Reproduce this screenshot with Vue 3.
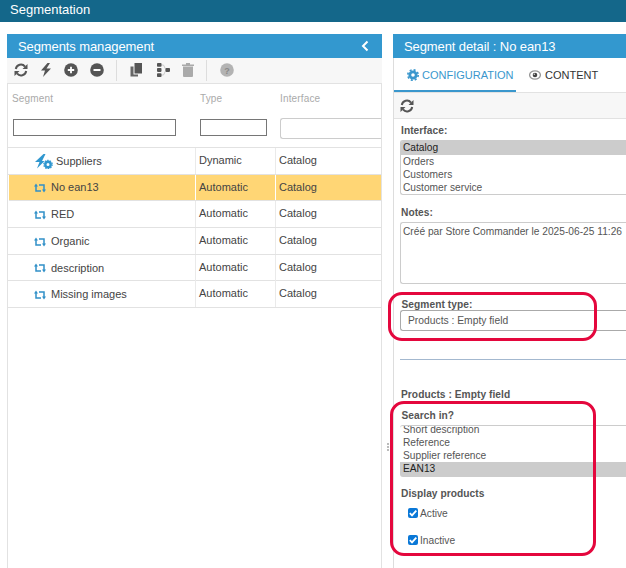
<script setup>
const rows = [
  { name: 'No ean13', type: 'Automatic', selected: true },
  { name: 'RED', type: 'Automatic' },
  { name: 'Organic', type: 'Automatic' },
  { name: 'description', type: 'Automatic' },
  { name: 'Missing images', type: 'Automatic' }
]
const interfaces = ['Catalog', 'Orders', 'Customers', 'Customer service']
const searchIn = ['Reference', 'Supplier reference']
</script>

<template>
  <div class="app">
    <header class="topbar">Segmentation</header>
    <main class="main">
      <section class="panel left">
        <div class="head">
          <span>Segments management</span>
          <svg class="chev" width="8" height="12" viewBox="0 0 8 12"><path d="M6.500 1.500 2 6l4.500 4.500" fill="none" stroke="#fff" stroke-width="2"/></svg>
        </div>
        <div class="toolbar">
          <svg class="ic" width="14" height="14" viewBox="0 0 14 14"><g fill="none" stroke="#555" stroke-width="2"><path d="M1.800 6A5.200 5.200 0 0 1 11 3.600"/><path d="M12.200 8A5.200 5.200 0 0 1 3 10.400"/></g><path d="M13.500 1v5h-5zM.5 13V8h5z" fill="#555"/></svg>
          <svg class="ic" width="12" height="14" viewBox="0 0 12 14"><path d="M7.500 0 1 7.500h4L3 14l8-8.500H6.500L10 0z" fill="#555"/></svg>
          <svg class="ic" width="14" height="14" viewBox="0 0 14 14"><circle cx="7" cy="7" r="6.800" fill="#555"/><path d="M3.800 7h6.400M7 3.800v6.400" stroke="#fff" stroke-width="1.800"/></svg>
          <svg class="ic" width="14" height="14" viewBox="0 0 14 14"><circle cx="7" cy="7" r="6.800" fill="#555"/><path d="M3.500 7h7" stroke="#fff" stroke-width="2"/></svg>
          <i class="sep"></i>
          <svg class="ic copy" width="12" height="14" viewBox="0 0 12 14"><path d="M4.500 0H12v10.500H4.500z" fill="#555"/><path d="M3.500 3.500H.5V13.500H8v-2H3.500z" fill="#666"/></svg>
          <svg class="ic" width="13" height="14" viewBox="0 0 13 14"><path d="M4 2h2.500l2.500 5-2.500 5H4" stroke="#ccc" fill="none" stroke-width="1"/><g fill="#555"><rect x="0" y="0" width="4.500" height="3.800" rx=".8"/><rect x="0" y="5.100" width="4.500" height="3.800" rx=".8"/><rect x="0" y="10.200" width="4.500" height="3.800" rx=".8"/><rect x="8.500" y="5.100" width="4.500" height="3.800" rx=".8"/></g></svg>
          <svg class="ic" width="12" height="14" viewBox="0 0 12 14"><path d="M0 1.500h12V3H0zM4 0h4v1.500H4zM1 3.500h10V13a1 1 0 0 1-1 1H2a1 1 0 0 1-1-1z" fill="#aaa"/></svg>
          <i class="sep"></i>
          <svg class="ic" width="14" height="14" viewBox="0 0 14 14"><circle cx="7" cy="7" r="6.800" fill="#b3b3b3"/><text x="7" y="10.500" text-anchor="middle" class="q">?</text></svg>
        </div>
        <div class="table">
          <div class="thead">
            <div class="cols labels">
              <span>Segment</span><span>Type</span><span>Interface</span>
            </div>
            <div class="cols filters">
              <span><i class="f f1"></i></span><span><i class="f f2"></i></span><span><i class="f f3"></i></span>
            </div>
          </div>
          <div class="row first">
            <span class="c1 dyn">
              <svg width="18" height="15" viewBox="0 0 18 15"><path d="M8.500 0 0 8h4.500L2 14.500 9.500 7H7L10.500 0z" fill="#3097cf"/><circle cx="13" cy="10.500" r="2.700" fill="none" stroke="#3097cf" stroke-width="2.400"/><circle cx="13" cy="10.500" r="4.200" fill="none" stroke="#3097cf" stroke-width="1.200" stroke-dasharray="1.400 1.240"/></svg>
              Suppliers
            </span>
            <span class="c2">Dynamic</span><span class="c3">Catalog</span>
          </div>
          <div v-for="r in rows" :key="r.name" class="row" :class="{ sel: r.selected }">
            <span class="c1 auto">
              <svg width="12" height="10" viewBox="0 0 12 10"><g fill="none" stroke="#3190c8" stroke-width="1.500"><path d="M2 2.500v5.500h5"/><path d="M10 7.500V2H5"/></g><path d="M0 3.500 2 .6l2 2.900zM8 6.500l2 2.900 2-2.900z" fill="#3190c8"/></svg>
              {{ r.name }}
            </span>
            <span class="c2">{{ r.type }}</span><span class="c3">Catalog</span>
          </div>
        </div>
      </section>

      <div class="splitter"><i></i><i></i><i></i></div>

      <section class="panel right">
        <div class="head"><span>Segment detail : No ean13</span></div>
        <div class="body">
          <div class="tabs">
            <div class="tab active">
              <svg width="12" height="12" viewBox="0 0 12 12"><circle cx="6" cy="6" r="3.200" fill="none" stroke="#3a97cd" stroke-width="2.800"/><circle cx="6" cy="6" r="5.200" fill="none" stroke="#3a97cd" stroke-width="1.600" stroke-dasharray="2.050 2.034"/></svg>
              CONFIGURATION
            </div>
            <div class="tab">
              <svg width="12" height="10" viewBox="0 0 12 10"><ellipse cx="6" cy="5" rx="5.400" ry="4.200" fill="#fff" stroke="#999" stroke-width="1.300"/><circle cx="6" cy="5" r="2.300" fill="#444"/><circle cx="5.300" cy="4.300" r=".7" fill="#ddd"/></svg>
              CONTENT
            </div>
          </div>
          <div class="subtool">
            <svg width="14" height="14" viewBox="0 0 14 14"><g fill="none" stroke="#555" stroke-width="2"><path d="M1.800 6A5.200 5.200 0 0 1 11 3.600"/><path d="M12.200 8A5.200 5.200 0 0 1 3 10.400"/></g><path d="M13.500 1v5h-5zM.5 13V8h5z" fill="#555"/></svg>
          </div>
          <div class="form">
            <label class="lbl l-iface">Interface:</label>
            <div class="list iface">
              <div v-for="(o, i) in interfaces" :key="o" class="opt" :class="{ on: i === 0 }">{{ o }}</div>
            </div>
            <label class="lbl l-notes">Notes:</label>
            <div class="notes">Créé par Store Commander le 2025-06-25 11:26</div>
            <label class="lbl l-type">Segment type:</label>
            <div class="select">Products : Empty field</div>
            <hr class="rule" />
            <div class="lbl l-prod">Products : Empty field</div>
            <label class="lbl l-search">Search in?</label>
            <div class="list search">
              <div class="opt clip">Short description</div>
              <div v-for="o in searchIn" :key="o" class="opt">{{ o }}</div>
              <div class="opt on tall">EAN13</div>
            </div>
            <div class="lbl l-disp">Display products</div>
            <label class="chk c-a"><i class="box"><svg width="10" height="10" viewBox="0 0 10 10"><path d="M1.800 5.200 4 7.400 8.300 2.600" fill="none" stroke="#fff" stroke-width="1.800"/></svg></i>Active</label>
            <label class="chk c-b"><i class="box"><svg width="10" height="10" viewBox="0 0 10 10"><path d="M1.800 5.200 4 7.400 8.300 2.600" fill="none" stroke="#fff" stroke-width="1.800"/></svg></i>Inactive</label>
          </div>
        </div>
      </section>
    </main>
    <div class="mark m1"></div>
    <div class="mark m2"></div>
  </div>
</template>

<style>
html, body { margin: 0; background: #fff; overflow: hidden; }
</style>

<style scoped>
.app {
  position: relative;
  width: 626px;
  height: 568px;
  overflow: hidden;
  background: #fff;
  font-family: "Liberation Sans", Arial, sans-serif;
  font-size: 11px;
  color: #444;
}
.topbar {
  height: 22px;
  line-height: 19px;
  padding-left: 10px;
  background: #14678a;
  color: #fff;
  font-size: 13px;
}
.main {
  display: flex;
  padding: 12px 0 0 7px;
  align-items: flex-start;
}
.panel { flex: none; height: 534px; display: flex; flex-direction: column; }
.left { width: 375px; }
.right { width: 300px; }
.head {
  flex: none;
  height: 24px;
  line-height: 23px;
  padding: 0 12px 0 11px;
  background: #3398cf;
  color: #fff;
  font-size: 13px;
  letter-spacing: -.1px;
  display: flex;
  justify-content: space-between;
  align-items: center;
}
.chev { margin-right: 1px; }
.toolbar {
  flex: none;
  box-sizing: border-box;
  height: 25px;
  background: #f7f7f7;
  display: flex;
  align-items: center;
  padding: 0 0 1px 7px;
  gap: 12px;
}
.ic { flex: none; }
.copy { margin-right: 3px; }
.sep { width: 1px; height: 21px; background: #ddd; margin-right: 1px; }
.q { font: bold 9px "Liberation Sans", sans-serif; fill: #888; }
.table {
  flex: 1;
  border: 1px solid #e2e2e2;
  border-width: 1px 1px 0;
  background: #fff;
}
.thead { height: 63.3px; border-bottom: 1px solid #e2e2e2; }
.cols { display: grid; }
.labels {
  grid-template-columns: 188px 80px 1fr;
  padding: 9px 0 0 4px;
  color: #aaa;
  font-size: 10px;
  height: 14px;
  letter-spacing: .15px;
}
.filters { grid-template-columns: 187px 80px 1fr; padding: 12px 0 0 5px; }
.f { display: block; box-sizing: border-box; height: 17px; border: 1px solid #767676; }
.f1 { width: 163px; }
.f2 { width: 67px; }
.f3 { width: 101px; height: 21px; border-color: #ccc; border-right: 0; border-radius: 3px 0 0 3px; margin-top: -1px; }
.row {
  display: grid;
  grid-template-columns: 187px 80px 1fr;
  height: 25.6px;
  line-height: 25px;
  border-bottom: 1px solid #e2e2e2;
  color: #444;
}
.row.sel { background: #ffd675; margin-left: 1px; grid-template-columns: 186px 80px 1fr; }
.c1 { padding: 1px 0 0 26px; display: flex; align-items: center; gap: 5px; }
.sel .c1 { padding: 0 0 0 25px; }
.row .c1 svg { flex: none; }
.dyn { padding-left: 27px; gap: 3px; }
.c2, .c3 { padding-left: 3px; border-left: 1px solid #eaeaea; }
.sel .c2, .sel .c3 { border-left-color: #fff; }
.splitter {
  width: 11px;
  flex: none;
  height: 534px;
  display: flex;
  flex-direction: column;
  align-items: center;
  padding-top: 409px;
  box-sizing: border-box;
  gap: 1px;
}
.splitter i { width: 2px; height: 2px; background: #bbb; display: block; }
.body {
  flex: 1;
  border-left: 1px solid #ddd;
  display: flex;
  flex-direction: column;
}
.tabs { height: 35px; display: flex; border-bottom: 1px solid #e2e2e2; box-sizing: border-box; font-size: 11px; }
.tab { display: flex; align-items: center; gap: 4px; color: #333; padding: 0 13px; height: 34px; box-sizing: border-box; }
.tab svg { flex: none; }
.tab.active { color: #3a97cd; border-bottom: 2px solid #3a97cd; width: 122px; gap: 3px; padding-top: 2px; }
.subtool { height: 26px; background: #f7f7f7; border-bottom: 1px solid #e2e2e2; box-sizing: border-box; display: flex; align-items: center; padding-left: 6px; }
.form { padding-left: 6px; font-size: 10.2px; }
.lbl { display: block; font-weight: bold; color: #555; font-size: 10.2px; line-height: 13px; letter-spacing: .05px; }
.l-iface { margin-top: 5px; padding-left: 1px; }
.list { border: 1px solid #ccc; border-right: 0; border-radius: 3px 0 0 3px; overflow: hidden; color: #555; box-sizing: border-box; }
.iface { margin-top: 3px; height: 55px; }
.opt { line-height: 13px; padding-left: 2px; height: 13px; }
.opt.on { background: #ccc; color: #222; height: 14px; }
.l-notes { margin-top: 11px; padding-left: 1px; }
.notes { margin-top: 3px; height: 62px; border: 1px solid #ccc; border-right: 0; border-radius: 3px 0 0 3px; box-sizing: border-box; padding: 2px 2px; line-height: 13px; color: #555; white-space: nowrap; }
.l-type { margin-top: 14px; padding-left: 1.5px; }
.select { margin-top: -1px; height: 21px; line-height: 19px; border: 1px solid #aaa; border-right: 0; border-radius: 3px 0 0 3px; box-sizing: border-box; padding-left: 7px; color: #555; font-size: 10.300px; }
.rule { margin: 28px 0 0; border: 0; height: 1px; background: #a3b8cf; }
.l-prod { margin-top: 28px; padding-left: 1px; }
.l-search { margin-top: 8px; padding-left: 1.5px; }
.search { margin-top: 3px; height: 52px; border: 0; border-top: 1px solid #ccc; }
.search .opt { padding-left: 3px; }
.clip { margin-top: -3px; }
.tall { height: 15px !important; }
.l-disp { margin-top: 10px; padding-left: 1px; }
.chk { display: flex; align-items: center; gap: 2px; padding-left: 8px; height: 14px; color: #555; }
.c-a { margin-top: 6px; }
.c-b { margin-top: 13px; }
.box { width: 10px; height: 10px; background: #0a78d7; border-radius: 2px; display: block; line-height: 0; }
.mark {
  position: absolute;
  box-sizing: border-box;
  border: 3px solid #e4073d;
  border-radius: 14px;
  pointer-events: none;
}
.m1 { left: 388px; top: 292px; width: 209px; height: 49px; }
.m2 { left: 390px; top: 401px; width: 206px; height: 155px; }
</style>
